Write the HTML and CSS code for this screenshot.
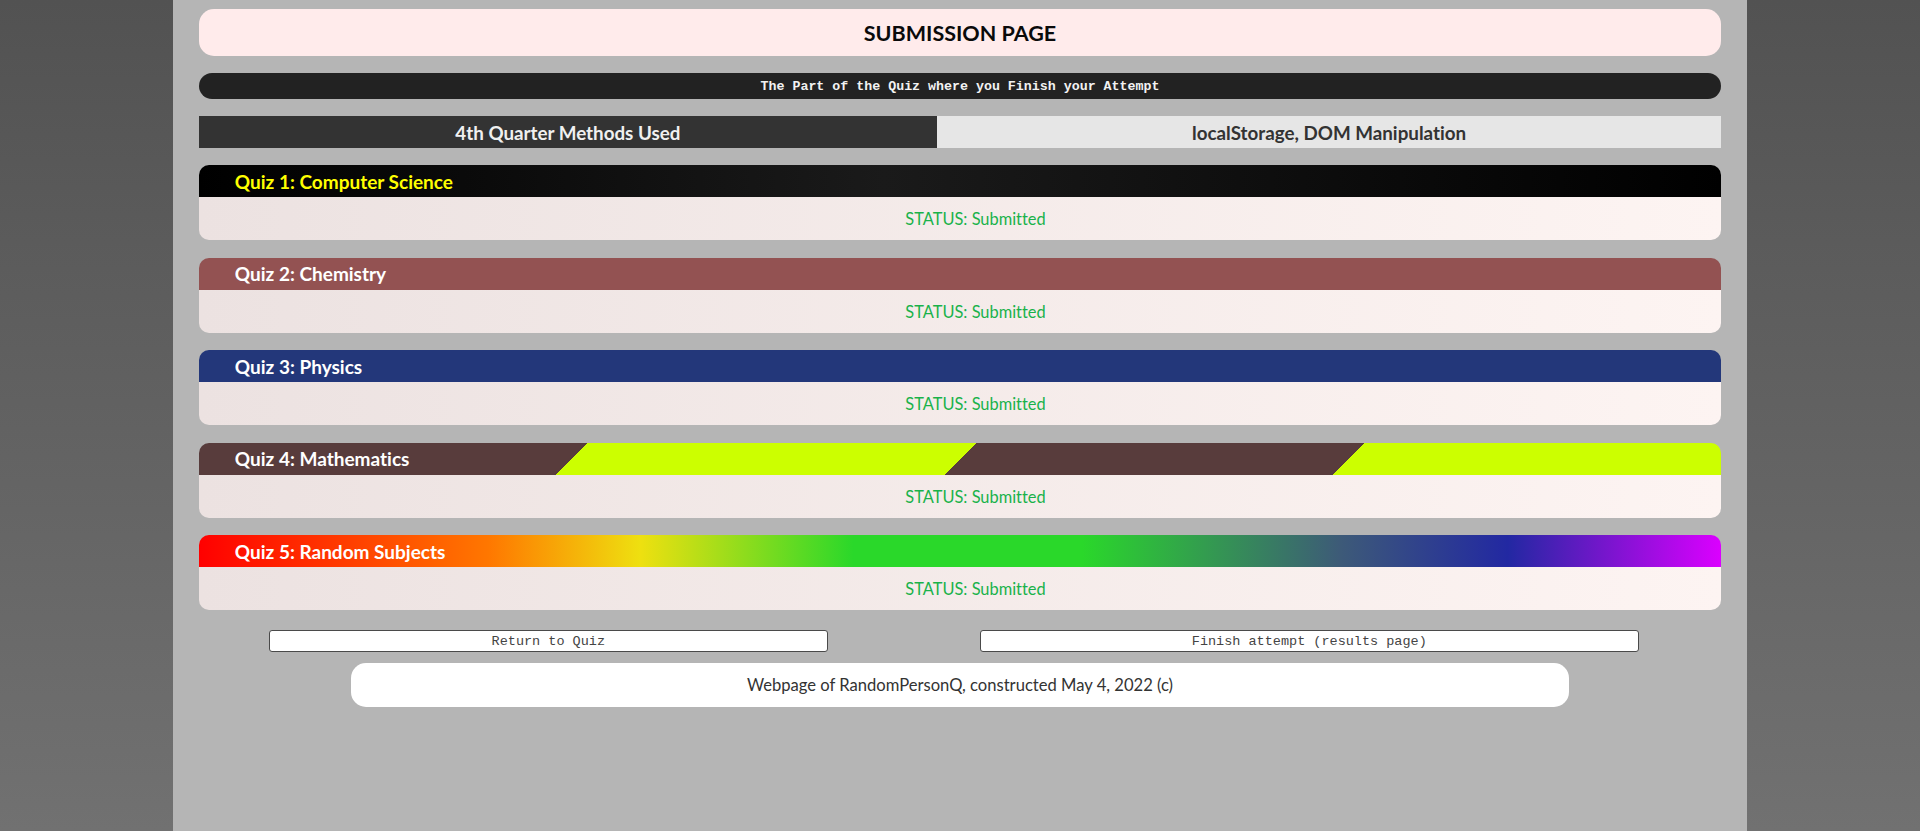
FILE: index.html
```html
<!DOCTYPE html>
<html lang="en">
<head>
<meta charset="utf-8">
<title>Submission Page</title>
<link rel="stylesheet" href="styles.css">
</head>
<body>
<main class="page">
  <header class="title-box"><h1 class="title">SUBMISSION PAGE</h1></header>
  <div class="subtitle">The Part of the Quiz where you Finish your Attempt</div>
  <div class="methods">
    <div class="methods-label">4th Quarter Methods Used</div>
    <div class="methods-value">localStorage, DOM Manipulation</div>
  </div>

  <section class="quiz">
    <div class="quiz-head q1">Quiz 1: Computer Science</div>
    <div class="quiz-body">STATUS: Submitted</div>
  </section>
  <section class="quiz">
    <div class="quiz-head q2">Quiz 2: Chemistry</div>
    <div class="quiz-body">STATUS: Submitted</div>
  </section>
  <section class="quiz">
    <div class="quiz-head q3">Quiz 3: Physics</div>
    <div class="quiz-body">STATUS: Submitted</div>
  </section>
  <section class="quiz">
    <div class="quiz-head q4">Quiz 4: Mathematics</div>
    <div class="quiz-body">STATUS: Submitted</div>
  </section>
  <section class="quiz">
    <div class="quiz-head q5">Quiz 5: Random Subjects</div>
    <div class="quiz-body">STATUS: Submitted</div>
  </section>

  <div class="actions">
    <button class="btn btn-return" type="button">Return to Quiz</button>
    <button class="btn btn-finish" type="button">Finish attempt (results page)</button>
  </div>

  <footer class="footer">Webpage of RandomPersonQ, constructed May 4, 2022 (c)</footer>
</main>
</body>
</html>
```
FILE: styles.css
```css
html {
  min-height: 100%;
  background: linear-gradient(180deg, #525252 0%, #717171 100%);
}
body {
  margin: 0;
  font-family: Lato, "Noto Sans", sans-serif;
  font-variant-ligatures: none;
}
.page {
  box-sizing: border-box;
  width: 82%;
  min-height: 100vh;
  margin: 0 auto;
  padding: 9px 26px 20px;
  background: #b5b5b5;
  display: flex;
  flex-direction: column;
}
.title-box {
  height: 47px;
  border-radius: 15px;
  background: #ffebeb;
  display: flex;
  align-items: center;
  justify-content: center;
  margin-bottom: 17px;
}
.title {
  margin: 0;
  font-size: 21.5px;
  font-weight: 700;
  color: #0a0a0a;
}
.subtitle {
  height: 26px;
  border-radius: 13px;
  background: #222;
  color: #f2f2f2;
  font-family: "Liberation Mono", "DejaVu Sans Mono", monospace;
  font-weight: 700;
  font-size: 13.3px;
  display: flex;
  align-items: center;
  justify-content: center;
  margin-bottom: 17px;
}
.methods {
  display: grid;
  grid-template-columns: 738fr 784fr;
  height: 32px;
  font-weight: 700;
  font-size: 18.8px;
  margin-bottom: 17px;
}
.methods-label,
.methods-value {
  display: flex;
  align-items: center;
  justify-content: center;
}
.methods-label {
  background: #333;
  color: #f0f0f0;
}
.methods-value {
  background: #e6e6e6;
  color: #333;
}
.quiz {
  margin-bottom: 17.5px;
}
.quiz-head {
  height: 32px;
  border-radius: 10px 10px 0 0;
  padding-left: 36px;
  display: flex;
  align-items: center;
  font-weight: 700;
  font-size: 19px;
  color: #fff;
}
.q1 {
  color: #ffff00;
  background: linear-gradient(90deg, #000 0%, #1a1a1a 45%, #000 100%);
}
.q2 { background: #935252; }
.q3 { background: #23377a; }
.q4 {
  background: linear-gradient(135deg, #583c3c 25%, #ccff00 25%, #ccff00 50%, #583c3c 50%, #583c3c 75%, #ccff00 75%);
}
.q5 {
  background: linear-gradient(90deg, #ff0000 0%, #ff7700 19%, #eee010 29%, #2ad82a 43%, #2ad82a 58%, #3d5a78 75%, #2228a2 86%, #db00ff 100%);
}
.quiz-body {
  height: 43px;
  border-radius: 0 0 10px 10px;
  background: linear-gradient(90deg, #ece2e1 0%, #fdf4f2 100%);
  display: flex;
  align-items: center;
  justify-content: center;
  padding-left: 31px;
  color: #19b24a;
  font-size: 16.4px;
}
.actions {
  display: grid;
  grid-template-columns: 559px 659px;
  column-gap: 152px;
  padding-left: 70px;
  margin-top: 2.5px;
  margin-bottom: 11px;
}
.btn {
  height: 22px;
  padding: 0;
  background: #fff;
  border: 1px solid #4a4a4a;
  border-radius: 3px;
  color: #444;
  font-family: "Liberation Mono", "DejaVu Sans Mono", monospace;
  font-size: 13.5px;
}
.footer {
  width: 80%;
  height: 44px;
  margin: 0 auto;
  border-radius: 15px;
  background: #fff;
  color: #333;
  font-size: 16.6px;
  display: flex;
  align-items: center;
  justify-content: center;
}
```
